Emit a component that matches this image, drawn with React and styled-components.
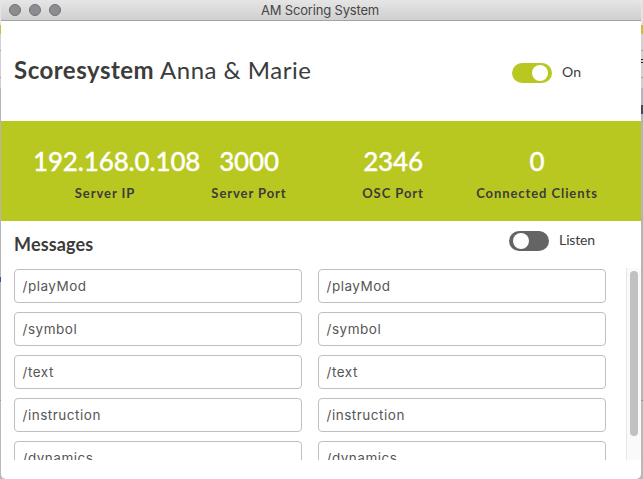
import React from 'react';
import styled, { createGlobalStyle } from 'styled-components';

const GlobalStyle = createGlobalStyle`
  *, *::before, *::after { box-sizing: border-box; }
  body { margin: 0; overflow: hidden; }
`;

const Desktop = styled.div`
  width: 643px;
  height: 479px;
  padding: 0 2px 0 1px;
  background:
    linear-gradient(transparent 277px, #3350a8 277px 282px, transparent 282px) left / 1px 100% no-repeat,
    linear-gradient(
      transparent 59px, #222 59px 60px, transparent 60px 62px, #222 62px 63px,
      transparent 63px 105px, #444a55 105px 114px, transparent 114px
    ) right / 2px 100% no-repeat,
    linear-gradient(
      #e4e4e4 0 25px, #cabb45 25px 34px, #d2d2d2 34px 50px, #a5a5a5 50px 51px,
      #d0d0d0 51px 77px, #a0a0a4 77px 78px, #cfcfd2 78px 88px, #a9b0cc 88px 89px,
      #b4b5bd 89px 122px, #b5b5b5 122px 400px, #959595 400px 401px, #b9b9b9 401px
    );
`;

const Window = styled.main`
  display: flex;
  flex-direction: column;
  height: 479px;
  overflow: hidden;
  border-radius: 5px;
  background: #fff;
  color: #3c3c3b;
  font-family: Lato, sans-serif;
`;

const TitleBar = styled.header`
  display: grid;
  grid-template-columns: 80px 1fr 80px;
  flex: none;
  height: 21px;
  border-bottom: 1px solid #a3a3a3;
  background: linear-gradient(#e5e5e5, #d0d0d0);
`;

const WindowButtons = styled.div`
  display: flex;
  gap: 8px;
  padding: 4px 0 0 8px;
`;

const WindowButton = styled.span`
  width: 12px;
  height: 12px;
  border: 1px solid #717174;
  border-radius: 50%;
  background: #8d8c91;
`;

const WindowTitle = styled.div`
  padding-right: 2px;
  color: #464646;
  font: 13px/21px Inter, sans-serif;
  letter-spacing: -0.18px;
  text-align: center;
  white-space: nowrap;
`;

const Hero = styled.section`
  display: flex;
  flex: none;
  justify-content: space-between;
  height: 100px;
  padding: 35px 60px 0 13px;
`;

const Heading = styled.h1`
  margin: 0;
  font-size: 24px;
  font-weight: 400;
  line-height: 28px;
  letter-spacing: 0.5px;
  white-space: nowrap;
`;

const Toggle = styled.label`
  display: flex;
  gap: 10px;
  height: 20px;
  margin-top: ${(p) => p.$top}px;
  font-size: 14px;
  line-height: 18px;
`;

const Track = styled.span`
  display: flex;
  justify-content: ${(p) => (p.$on ? 'flex-end' : 'flex-start')};
  width: 40px;
  height: 20px;
  padding: 2px 4px;
  border-radius: 10px;
  background: ${(p) => (p.$on ? '#b9c721' : '#646464')};
`;

const Knob = styled.span`
  width: 16px;
  height: 16px;
  border-radius: 50%;
  background: #fff;
`;

const ToggleText = styled.span`
  letter-spacing: ${(p) => (p.$on ? '0' : '-0.15px')};
`;

const StatusBand = styled.section`
  display: grid;
  grid-template-columns: 144px 144px 144px 144px;
  justify-content: center;
  flex: none;
  height: 100px;
  padding-top: 23px;
  background: #b9c721;
`;

const Stat = styled.div`
  text-align: center;
  white-space: nowrap;
`;

const StatValue = styled.div`
  color: #fff;
  font-size: 26px;
  font-weight: 500;
  line-height: 34px;
  letter-spacing: -0.15px;
  -webkit-text-stroke: 0.3px #fff;
`;

const StatLabel = styled.div`
  margin-top: 6px;
  font-size: 13px;
  font-weight: 700;
  line-height: 18px;
  letter-spacing: 0.92px;
`;

const MessagesHeader = styled.section`
  display: flex;
  flex: none;
  justify-content: space-between;
  height: 47px;
  padding: 0 46px 0 13px;
`;

const SectionTitle = styled.h2`
  margin: 11px 0 0;
  font-size: 18px;
  font-weight: 700;
  line-height: 25px;
  letter-spacing: 0.15px;
`;

const MessageArea = styled.section`
  display: flex;
  flex: none;
  justify-content: space-between;
  height: 192px;
  overflow: hidden;
`;

const MessageGrid = styled.div`
  display: grid;
  grid-template-columns: 288px 288px;
  grid-auto-rows: 34px;
  gap: 9px 16px;
  padding: 1px 0 0 13px;
`;

const MessageField = styled.div`
  padding: 0 7.5px;
  border: 1px solid #bfbfbf;
  border-radius: 4px;
  color: #565656;
  font: 400 13.5px/32px Inter, sans-serif;
  letter-spacing: 0.52px;
`;

const ScrollTrack = styled.div`
  width: 15px;
  padding: 3px 3px 0;
  border-left: 1px solid #e7e7e7;
  background: #fafafa;
`;

const ScrollThumb = styled.div`
  width: 8px;
  height: 165px;
  border-radius: 4px;
  background: #c1c1c1;
`;

const stats = [
  ['192.168.0.108', 'Server IP'],
  ['3000', 'Server Port'],
  ['2346', 'OSC Port'],
  ['0', 'Connected Clients'],
];

const messages = ['/playMod', '/symbol', '/text', '/instruction', '/dynamics'];

function Switch({ on, top, children }) {
  return (
    <Toggle $top={top}>
      <Track $on={on}><Knob /></Track>
      <ToggleText $on={on}>{children}</ToggleText>
    </Toggle>
  );
}

export default function App() {
  return (
    <Desktop>
      <GlobalStyle />
      <Window>
        <TitleBar>
          <WindowButtons>
            <WindowButton /><WindowButton /><WindowButton />
          </WindowButtons>
          <WindowTitle>AM Scoring System</WindowTitle>
        </TitleBar>
        <Hero>
          <Heading><b>Scoresystem</b> Anna &amp; Marie</Heading>
          <Switch on top={7}>On</Switch>
        </Hero>
        <StatusBand>
          {stats.map(([value, label]) => (
            <Stat key={label}>
              <StatValue>{value}</StatValue>
              <StatLabel>{label}</StatLabel>
            </Stat>
          ))}
        </StatusBand>
        <MessagesHeader>
          <SectionTitle>Messages</SectionTitle>
          <Switch top={10}>Listen</Switch>
        </MessagesHeader>
        <MessageArea>
          <MessageGrid>
            {messages.flatMap((text) => [
              <MessageField key={`${text}-in`}>{text}</MessageField>,
              <MessageField key={`${text}-out`}>{text}</MessageField>,
            ])}
          </MessageGrid>
          <ScrollTrack><ScrollThumb /></ScrollTrack>
        </MessageArea>
      </Window>
    </Desktop>
  );
}
